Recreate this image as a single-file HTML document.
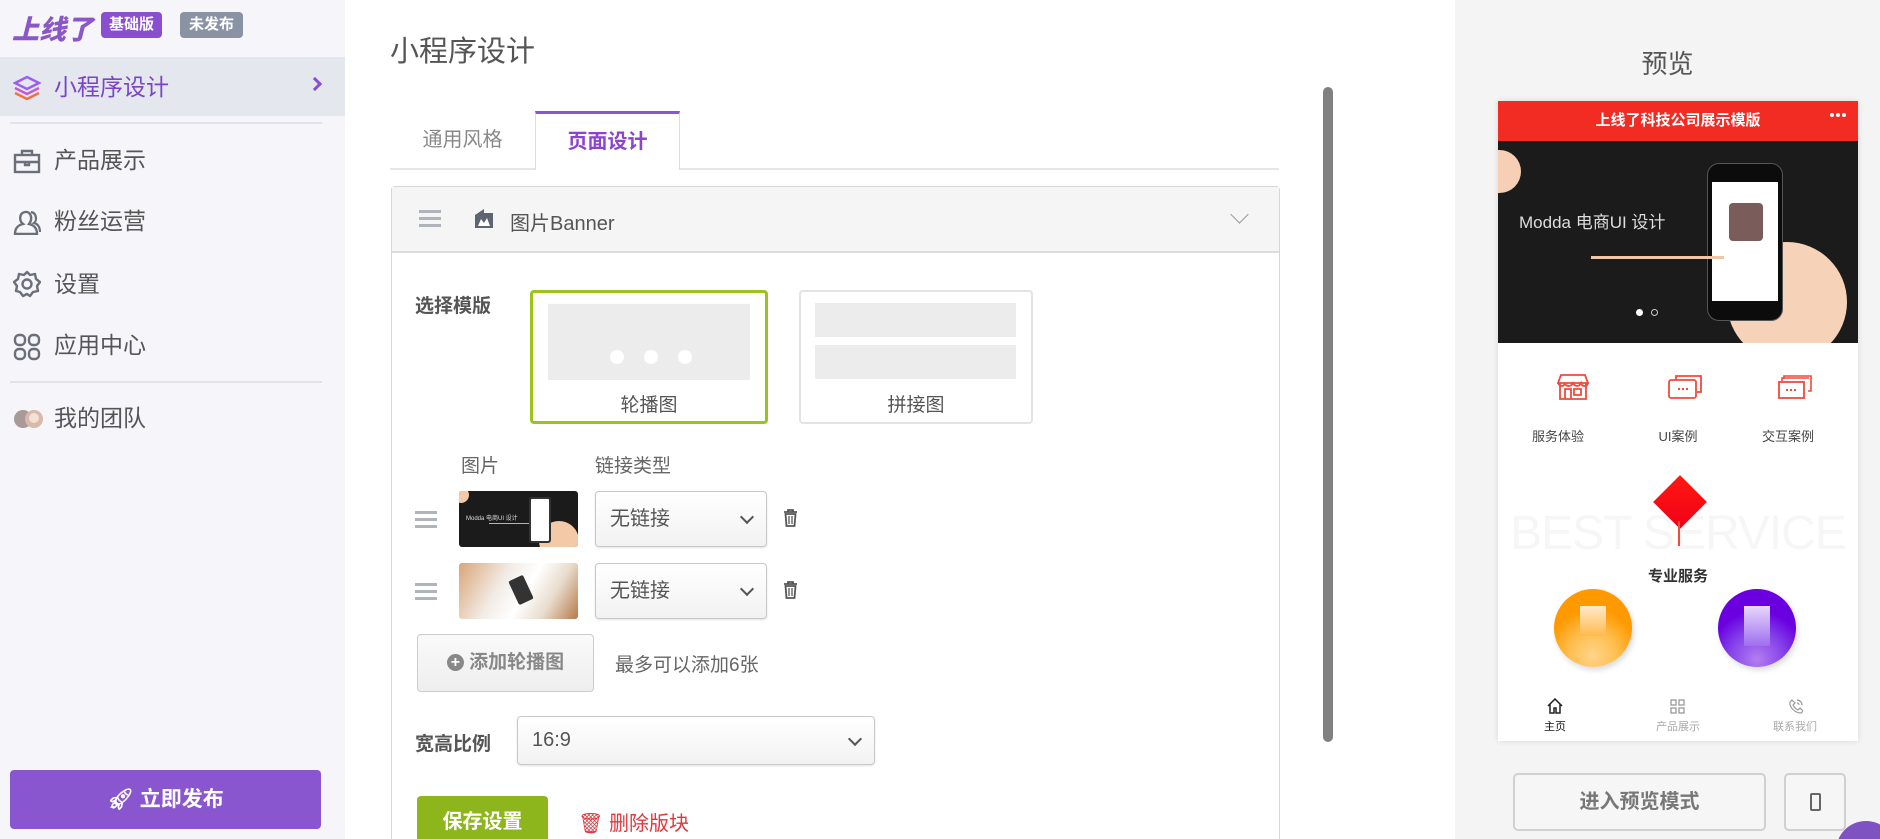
<!DOCTYPE html>
<html><head><meta charset="utf-8">
<style>
*{box-sizing:border-box;margin:0;padding:0}
html,body{width:1880px;height:839px;overflow:hidden}
body{background:#fff;font-family:"Liberation Sans","Noto Sans CJK SC",sans-serif;color:#555}
#w{position:relative;width:1880px;height:839px;overflow:hidden}
.a{position:absolute}
.side{left:0;top:0;width:345px;height:839px;background:#f5f5fa}
.nav{left:0;width:345px;height:40px;line-height:40px;font-size:23px;color:#555;padding-left:54px}
.nav svg{position:absolute;left:13px;top:8px}
.badge{height:26px;line-height:26px;font-size:15px;font-weight:bold;color:#fff;border-radius:4px;text-align:center}
.sel{border:1px solid #c8c8c8;border-radius:4px;background:linear-gradient(#fff,#f2f2f2);box-shadow:0 1px 2px rgba(0,0,0,.12);font-size:20px;color:#555;padding-left:14px}
.sel::after{content:"";position:absolute;right:14px;top:50%;width:8px;height:8px;border-right:2px solid #555;border-bottom:2px solid #555;transform:translateY(-70%) rotate(45deg)}
.ham{width:22px;height:3px;background:#b0b3ba;box-shadow:0 7px 0 #b0b3ba,0 14px 0 #b0b3ba}
</style></head><body><div id="w">
<div class="a side"></div>
<div class="a" style="left:12px;top:8px;font-size:27px;font-weight:900;font-style:italic;color:#8a56c8">上线了</div>
<div class="a badge" style="left:101px;top:12px;width:61px;background:#8a4fd0">基础版</div>
<div class="a badge" style="left:180px;top:12px;width:63px;background:#8a93a3">未发布</div>
<div class="a" style="left:0;top:57px;width:345px;height:59px;background:#e4e7ee"></div>
<div class="a nav" style="top:67px;color:#7a44c8">
<svg width="28" height="26" viewBox="0 0 28 26"><path d="M14 2 L26 8 L14 14 L2 8Z" fill="none" stroke="#9a5ef0" stroke-width="2.4"/><path d="M2 13 L14 19 L26 13" fill="none" stroke="#c45ad0" stroke-width="2.4"/><path d="M2 18 L14 24 L26 18" fill="none" stroke="#f07040" stroke-width="2.4"/></svg>小程序设计</div>
<div class="a" style="left:310px;top:79px;width:10px;height:10px;border-right:3px solid #8a4fd0;border-top:3px solid #8a4fd0;transform:rotate(45deg)"></div>
<div class="a" style="left:10px;top:122px;width:312px;height:2px;background:#e2e3e8"></div>
<div class="a nav" style="top:140px"><svg width="28" height="26" viewBox="0 0 28 26"><rect x="2" y="7" width="24" height="17" fill="none" stroke="#6b6f78" stroke-width="2.4"/><path d="M9 7V3h10v4M2 14h24M12 14v3h4v-3" fill="none" stroke="#6b6f78" stroke-width="2.4"/></svg>产品展示</div>
<div class="a nav" style="top:201px"><svg width="28" height="26" viewBox="0 0 28 26"><path d="M2 25 C2 18 6 16 10 15 C6 12 6 4 12 3 C18 2 20 10 16 15 C20 16 24 18 24 25Z" fill="none" stroke="#6b6f78" stroke-width="2.4"/><path d="M18 3 C24 4 24 12 21 14 C25 15 27 18 27 23" fill="none" stroke="#6b6f78" stroke-width="2.2"/></svg>粉丝运营</div>
<div class="a nav" style="top:264px"><svg width="28" height="28" viewBox="0 0 28 28" style="top:6px"><path d="M14 2 L17 5 L22 4 L23 9 L27 12 L24 16 L25 21 L20 22 L17 26 L14 24 L10 26 L7 22 L3 21 L4 16 L1 12 L5 9 L6 4 L11 5Z" fill="none" stroke="#6b6f78" stroke-width="2.4" stroke-linejoin="round"/><circle cx="14" cy="14" r="4.5" fill="none" stroke="#6b6f78" stroke-width="2.4"/></svg>设置</div>
<div class="a nav" style="top:325px"><svg width="28" height="28" viewBox="0 0 28 28"><rect x="2" y="2" width="10" height="10" rx="4" fill="none" stroke="#6b6f78" stroke-width="2.4"/><rect x="16" y="2" width="10" height="10" rx="4" fill="none" stroke="#6b6f78" stroke-width="2.4"/><rect x="2" y="16" width="10" height="10" rx="4" fill="none" stroke="#6b6f78" stroke-width="2.4"/><rect x="16" y="16" width="10" height="10" rx="4" fill="none" stroke="#6b6f78" stroke-width="2.4"/></svg>应用中心</div>
<div class="a" style="left:10px;top:381px;width:312px;height:2px;background:#e2e3e8"></div>
<div class="a nav" style="top:398px"><svg width="32" height="26" viewBox="0 0 32 26"><circle cx="10" cy="13" r="9" fill="#a99"/><circle cx="21" cy="13" r="9" fill="#d9b9a9"/><circle cx="21" cy="12" r="5" fill="#f3e1d6"/></svg>我的团队</div>
<div class="a" style="left:10px;top:770px;width:311px;height:59px;background:#8a56d0;border-radius:4px;color:#fff;font-weight:bold;font-size:21px;text-align:center;line-height:59px">🚀︎ 立即发布</div>

<div class="a" style="left:390px;top:28px;font-size:29px;color:#555">小程序设计</div>
<div class="a" style="left:390px;top:168px;width:889px;height:2px;background:#e6e6e6"></div>
<div class="a" style="left:390px;top:111px;width:145px;height:58px;line-height:58px;text-align:center;font-size:20px;color:#888">通用风格</div>
<div class="a" style="left:535px;top:111px;width:145px;height:59px;line-height:56px;text-align:center;font-size:20px;color:#8a44d0;font-weight:bold;background:#fff;border:1px solid #ddd;border-top:3px solid #8a56d0;border-bottom:none">页面设计</div>
<div class="a" style="left:391px;top:186px;width:889px;height:653px;border:1px solid #d6d6d6;border-bottom:none;border-radius:4px 4px 0 0"></div>
<div class="a" style="left:392px;top:187px;width:887px;height:66px;background:#f5f5f5;border-bottom:2px solid #ddd"></div>
<div class="a ham" style="left:419px;top:210px"></div>
<svg class="a" style="left:472px;top:206px" width="24" height="24" viewBox="0 0 24 24"><path d="M3 9 L12 3 L12 7 L21 7 L21 22 L3 22Z" fill="#5f6570"/><path d="M6 20 L9 13 L12 17 L15 12 L18 20Z" fill="#fff"/></svg>
<div class="a" style="left:510px;top:207px;font-size:20px;color:#555">图片Banner</div>
<div class="a" style="left:1233px;top:208px;width:13px;height:13px;border-right:1.5px solid #999;border-bottom:1.5px solid #999;transform:rotate(45deg)"></div>

<div class="a" style="left:415px;top:291px;font-size:19px;font-weight:bold;color:#555">选择模版</div>
<div class="a" style="left:530px;top:290px;width:238px;height:134px;border:3px solid #9ac31c;border-radius:4px"></div>
<div class="a" style="left:548px;top:304px;width:202px;height:76px;background:#ececec"></div>
<div class="a" style="left:610px;top:350px;width:14px;height:14px;border-radius:50%;background:#fff;box-shadow:34px 0 0 #fff,68px 0 0 #fff"></div>
<div class="a" style="left:530px;top:390px;width:238px;text-align:center;font-size:19px;color:#555">轮播图</div>
<div class="a" style="left:799px;top:290px;width:234px;height:134px;border:2px solid #e3e3e3;border-radius:4px"></div>
<div class="a" style="left:815px;top:303px;width:201px;height:34px;background:#ececec"></div>
<div class="a" style="left:815px;top:345px;width:201px;height:34px;background:#ececec"></div>
<div class="a" style="left:799px;top:390px;width:234px;text-align:center;font-size:19px;color:#555">拼接图</div>

<div class="a" style="left:461px;top:451px;font-size:19px;color:#666">图片</div>
<div class="a" style="left:595px;top:451px;font-size:19px;color:#666">链接类型</div>
<div class="a ham" style="left:415px;top:511px"></div>
<div class="a" style="left:459px;top:491px;width:119px;height:56px;background:#1b1b1b;border-radius:3px;overflow:hidden">
<div class="a" style="left:-6px;top:-4px;width:16px;height:16px;border-radius:50%;background:#f3c9a8"></div>
<div class="a" style="left:80px;top:30px;width:40px;height:40px;border-radius:50%;background:#f3c9a8"></div>
<div class="a" style="left:70px;top:6px;width:22px;height:46px;background:#fff;border:2px solid #333;border-radius:3px"></div>
<div class="a" style="left:7px;top:22px;font-size:6px;color:#ddd;white-space:nowrap">Modda 电商UI 设计</div>
<div class="a" style="left:30px;top:32px;width:40px;height:1px;background:#caa"></div></div>
<div class="a sel" style="left:595px;top:491px;width:172px;height:56px;line-height:54px">无链接</div>
<svg class="a" style="left:783px;top:509px" width="15" height="18" viewBox="0 0 15 18"><path d="M1 3h13M5 3V1h5v2M2.5 5h10l-1 12h-8Z" fill="none" stroke="#555" stroke-width="1.8"/><path d="M6 7v8M9 7v8" stroke="#555" stroke-width="1.3"/></svg>
<div class="a ham" style="left:415px;top:583px"></div>
<div class="a" style="left:459px;top:563px;width:119px;height:56px;border-radius:3px;overflow:hidden;background:linear-gradient(120deg,#d9a577 0%,#f2ebe5 35%,#fff 55%,#e8dccd 75%,#b57a4a 100%)"><div class="a" style="left:54px;top:14px;width:16px;height:26px;background:#333;transform:rotate(-25deg);border-radius:2px"></div></div>
<div class="a sel" style="left:595px;top:563px;width:172px;height:56px;line-height:54px">无链接</div>
<svg class="a" style="left:783px;top:581px" width="15" height="18" viewBox="0 0 15 18"><path d="M1 3h13M5 3V1h5v2M2.5 5h10l-1 12h-8Z" fill="none" stroke="#555" stroke-width="1.8"/><path d="M6 7v8M9 7v8" stroke="#555" stroke-width="1.3"/></svg>
<div class="a" style="left:417px;top:634px;width:177px;height:58px;border:1px solid #ccc;border-radius:4px;background:linear-gradient(#fafafa,#eee);text-align:center;line-height:56px;font-size:19px;font-weight:bold;color:#888"><span style="display:inline-block;width:17px;height:17px;border-radius:50%;background:#888;color:#fff;font-size:16px;line-height:17px;vertical-align:1px">+</span> 添加轮播图</div>
<div class="a" style="left:615px;top:650px;font-size:19px;color:#666">最多可以添加6张</div>
<div class="a" style="left:415px;top:729px;font-size:19px;font-weight:bold;color:#555">宽高比例</div>
<div class="a sel" style="left:517px;top:716px;width:358px;height:49px;line-height:47px">16:9</div>
<div class="a" style="left:417px;top:796px;width:131px;height:43px;background:#8db61c;border-radius:4px 4px 0 0;color:#fff;font-weight:bold;font-size:20px;text-align:center;line-height:52px;overflow:hidden">保存设置</div>
<div class="a" style="left:578px;top:812px;font-size:20px;line-height:24px;color:#e0383e">🗑︎ 删除版块</div>

<div class="a" style="left:1323px;top:87px;width:10px;height:655px;background:#808080;border-radius:5px"></div>

<div class="a" style="left:1455px;top:0;width:425px;height:839px;background:#f4f4f4"></div>
<div class="a" style="left:1455px;top:44px;width:425px;text-align:center;font-size:26px;color:#555"><span style="position:relative;left:0">预览</span></div>
<div class="a" style="left:1498px;top:101px;width:360px;height:640px;background:#fff;box-shadow:0 0 6px rgba(0,0,0,.12);overflow:hidden">
<div class="a" style="left:0;top:0;width:360px;height:40px;background:#f22c22;color:#fff;font-weight:bold;font-size:15px;text-align:center;line-height:40px">上线了科技公司展示模版</div>
<div class="a" style="right:12px;top:12px;width:4px;height:4px;border-radius:50%;background:#fff;box-shadow:-6px 0 0 #fff,-12px 0 0 #fff"></div>
<div class="a" style="left:0;top:40px;width:360px;height:202px;background:#1b1b1b;overflow:hidden">
<div class="a" style="left:-20px;top:9px;width:43px;height:43px;border-radius:50%;background:#f6cfb4"></div>
<div class="a" style="left:229px;top:101px;width:120px;height:120px;border-radius:50%;background:#f6d2b8"></div>
<div class="a" style="left:209px;top:22px;width:76px;height:158px;background:#0c0c0c;border:1.5px solid #555;border-radius:12px"></div>
<div class="a" style="left:214px;top:41px;width:66px;height:119px;background:#fff"></div>
<div class="a" style="left:231px;top:62px;width:34px;height:38px;background:#7a5c5a;border-radius:4px"></div>
<div class="a" style="left:21px;top:67px;font-size:17px;color:#ddd;white-space:nowrap">Modda 电商UI 设计</div>
<div class="a" style="left:93px;top:115px;width:133px;height:3px;background:#f0c6a8"></div>
<div class="a" style="left:138px;top:168px;width:7px;height:7px;border-radius:50%;background:#fff"></div>
<div class="a" style="left:153px;top:168px;width:7px;height:7px;border-radius:50%;border:1px solid #ccc"></div>
</div>
<svg class="a" style="left:59px;top:272px" width="32" height="28" viewBox="0 0 32 28"><path d="M4 2h24l3 8H1Z M3 10v16h26V10 M8 26v-10h6v10 M17 16h7v6h-7Z M1 10c2 4 6 4 7 0c1 4 6 4 8 0c2 4 6 4 8 0c1 4 6 4 7 0" fill="none" stroke="#f04a3a" stroke-width="1.8"/></svg>
<svg class="a" style="left:170px;top:273px" width="34" height="26" viewBox="0 0 34 26"><path d="M8 6V2h25v16h-4" fill="none" stroke="#f04a3a" stroke-width="1.8"/><rect x="1" y="6" width="27" height="18" rx="2" fill="none" stroke="#f04a3a" stroke-width="1.8"/><path d="M10 15h2M14 15h2M18 15h2" stroke="#f04a3a" stroke-width="2"/></svg>
<svg class="a" style="left:280px;top:274px" width="34" height="24" viewBox="0 0 34 24"><path d="M6 4V1h27v15h-3M4 6V3h27" fill="none" stroke="#f04a3a" stroke-width="1.6"/><rect x="1" y="7" width="25" height="16" fill="none" stroke="#f04a3a" stroke-width="1.8"/><path d="M8 15h2M12 15h2M16 15h2" stroke="#f04a3a" stroke-width="2"/></svg>
<div class="a" style="left:0;top:325px;width:120px;text-align:center;font-size:13px;color:#444">服务体验</div>
<div class="a" style="left:120px;top:325px;width:120px;text-align:center;font-size:13px;color:#444">UI案例</div>
<div class="a" style="left:230px;top:325px;width:120px;text-align:center;font-size:13px;color:#444">交互案例</div>
<div class="a" style="left:0;top:405px;width:360px;text-align:center;font-size:48px;color:#f6f6f6;white-space:nowrap;letter-spacing:-1px;overflow:hidden">BEST SERVICE</div>
<div class="a" style="left:163px;top:382px;width:38px;height:38px;background:linear-gradient(135deg,#ff1a10,#f00018);transform:rotate(45deg)"></div>
<div class="a" style="left:180px;top:420px;width:2px;height:25px;background:#f04a3a"></div>
<div class="a" style="left:0;top:464px;width:360px;text-align:center;font-size:15px;color:#333;font-weight:bold">专业服务</div>
<div class="a" style="left:56px;top:488px;width:78px;height:78px;border-radius:50%;background:radial-gradient(circle at 50% 85%,#ffd48a 0,#ffbf50 30%,#ff9900 60%);box-shadow:2px 3px 6px rgba(0,0,0,.15)"></div>
<div class="a" style="left:82px;top:505px;width:26px;height:30px;background:linear-gradient(#fff,#ffb84a);opacity:.8"></div>
<div class="a" style="left:220px;top:488px;width:78px;height:78px;border-radius:50%;background:radial-gradient(circle at 50% 90%,#b27ef0 0,#8440e8 35%,#6a00e0 60%);box-shadow:2px 3px 6px rgba(0,0,0,.15)"></div>
<div class="a" style="left:246px;top:505px;width:26px;height:40px;background:linear-gradient(#fff,#a070f0);opacity:.85"></div>
<div class="a" style="left:0;top:590px;width:360px;height:50px;background:#fff"></div>
<svg class="a" style="left:49px;top:597px" width="16" height="16" viewBox="0 0 16 16"><path d="M1 8L8 1l7 7M3 6v9h4v-5h2v5h4V6" fill="none" stroke="#222" stroke-width="1.5"/></svg>
<div class="a" style="left:0;top:617px;width:114px;text-align:center;font-size:11px;color:#111">主页</div>
<svg class="a" style="left:172px;top:598px" width="15" height="15" viewBox="0 0 15 15"><g fill="none" stroke="#999" stroke-width="1.3"><rect x="1" y="1" width="5" height="5"/><rect x="9" y="1" width="5" height="5"/><rect x="1" y="9" width="5" height="5"/><rect x="9" y="9" width="5" height="5"/></g></svg>
<div class="a" style="left:123px;top:617px;width:114px;text-align:center;font-size:11px;color:#aaa">产品展示</div>
<svg class="a" style="left:291px;top:598px" width="14" height="15" viewBox="0 0 14 15"><path d="M3 1l3 3-2 2c1 2 3 4 5 5l2-2 3 3-2 2C6 14 0 8 1 3Z M8 1a5 5 0 0 1 5 5M8 4a2 2 0 0 1 2 2" fill="none" stroke="#999" stroke-width="1.2"/></svg>
<div class="a" style="left:240px;top:617px;width:114px;text-align:center;font-size:11px;color:#aaa">联系我们</div>
</div>
<div class="a" style="left:1513px;top:773px;width:253px;height:58px;border:2px solid #d0d0d0;border-radius:5px;background:#f6f6f6;text-align:center;line-height:54px;font-size:20px;font-weight:bold;color:#777">进入预览模式</div>
<div class="a" style="left:1784px;top:773px;width:62px;height:58px;border:2px solid #d0d0d0;border-radius:5px;background:#f6f6f6"></div>
<div class="a" style="left:1810px;top:793px;width:11px;height:18px;border:2px solid #666;border-radius:2px"></div>
<div class="a" style="left:1836px;top:821px;width:44px;height:18px;overflow:hidden"><div class="a" style="left:0;top:0;width:60px;height:60px;border-radius:50%;background:#7e52c0"></div></div>
</div></body></html>
